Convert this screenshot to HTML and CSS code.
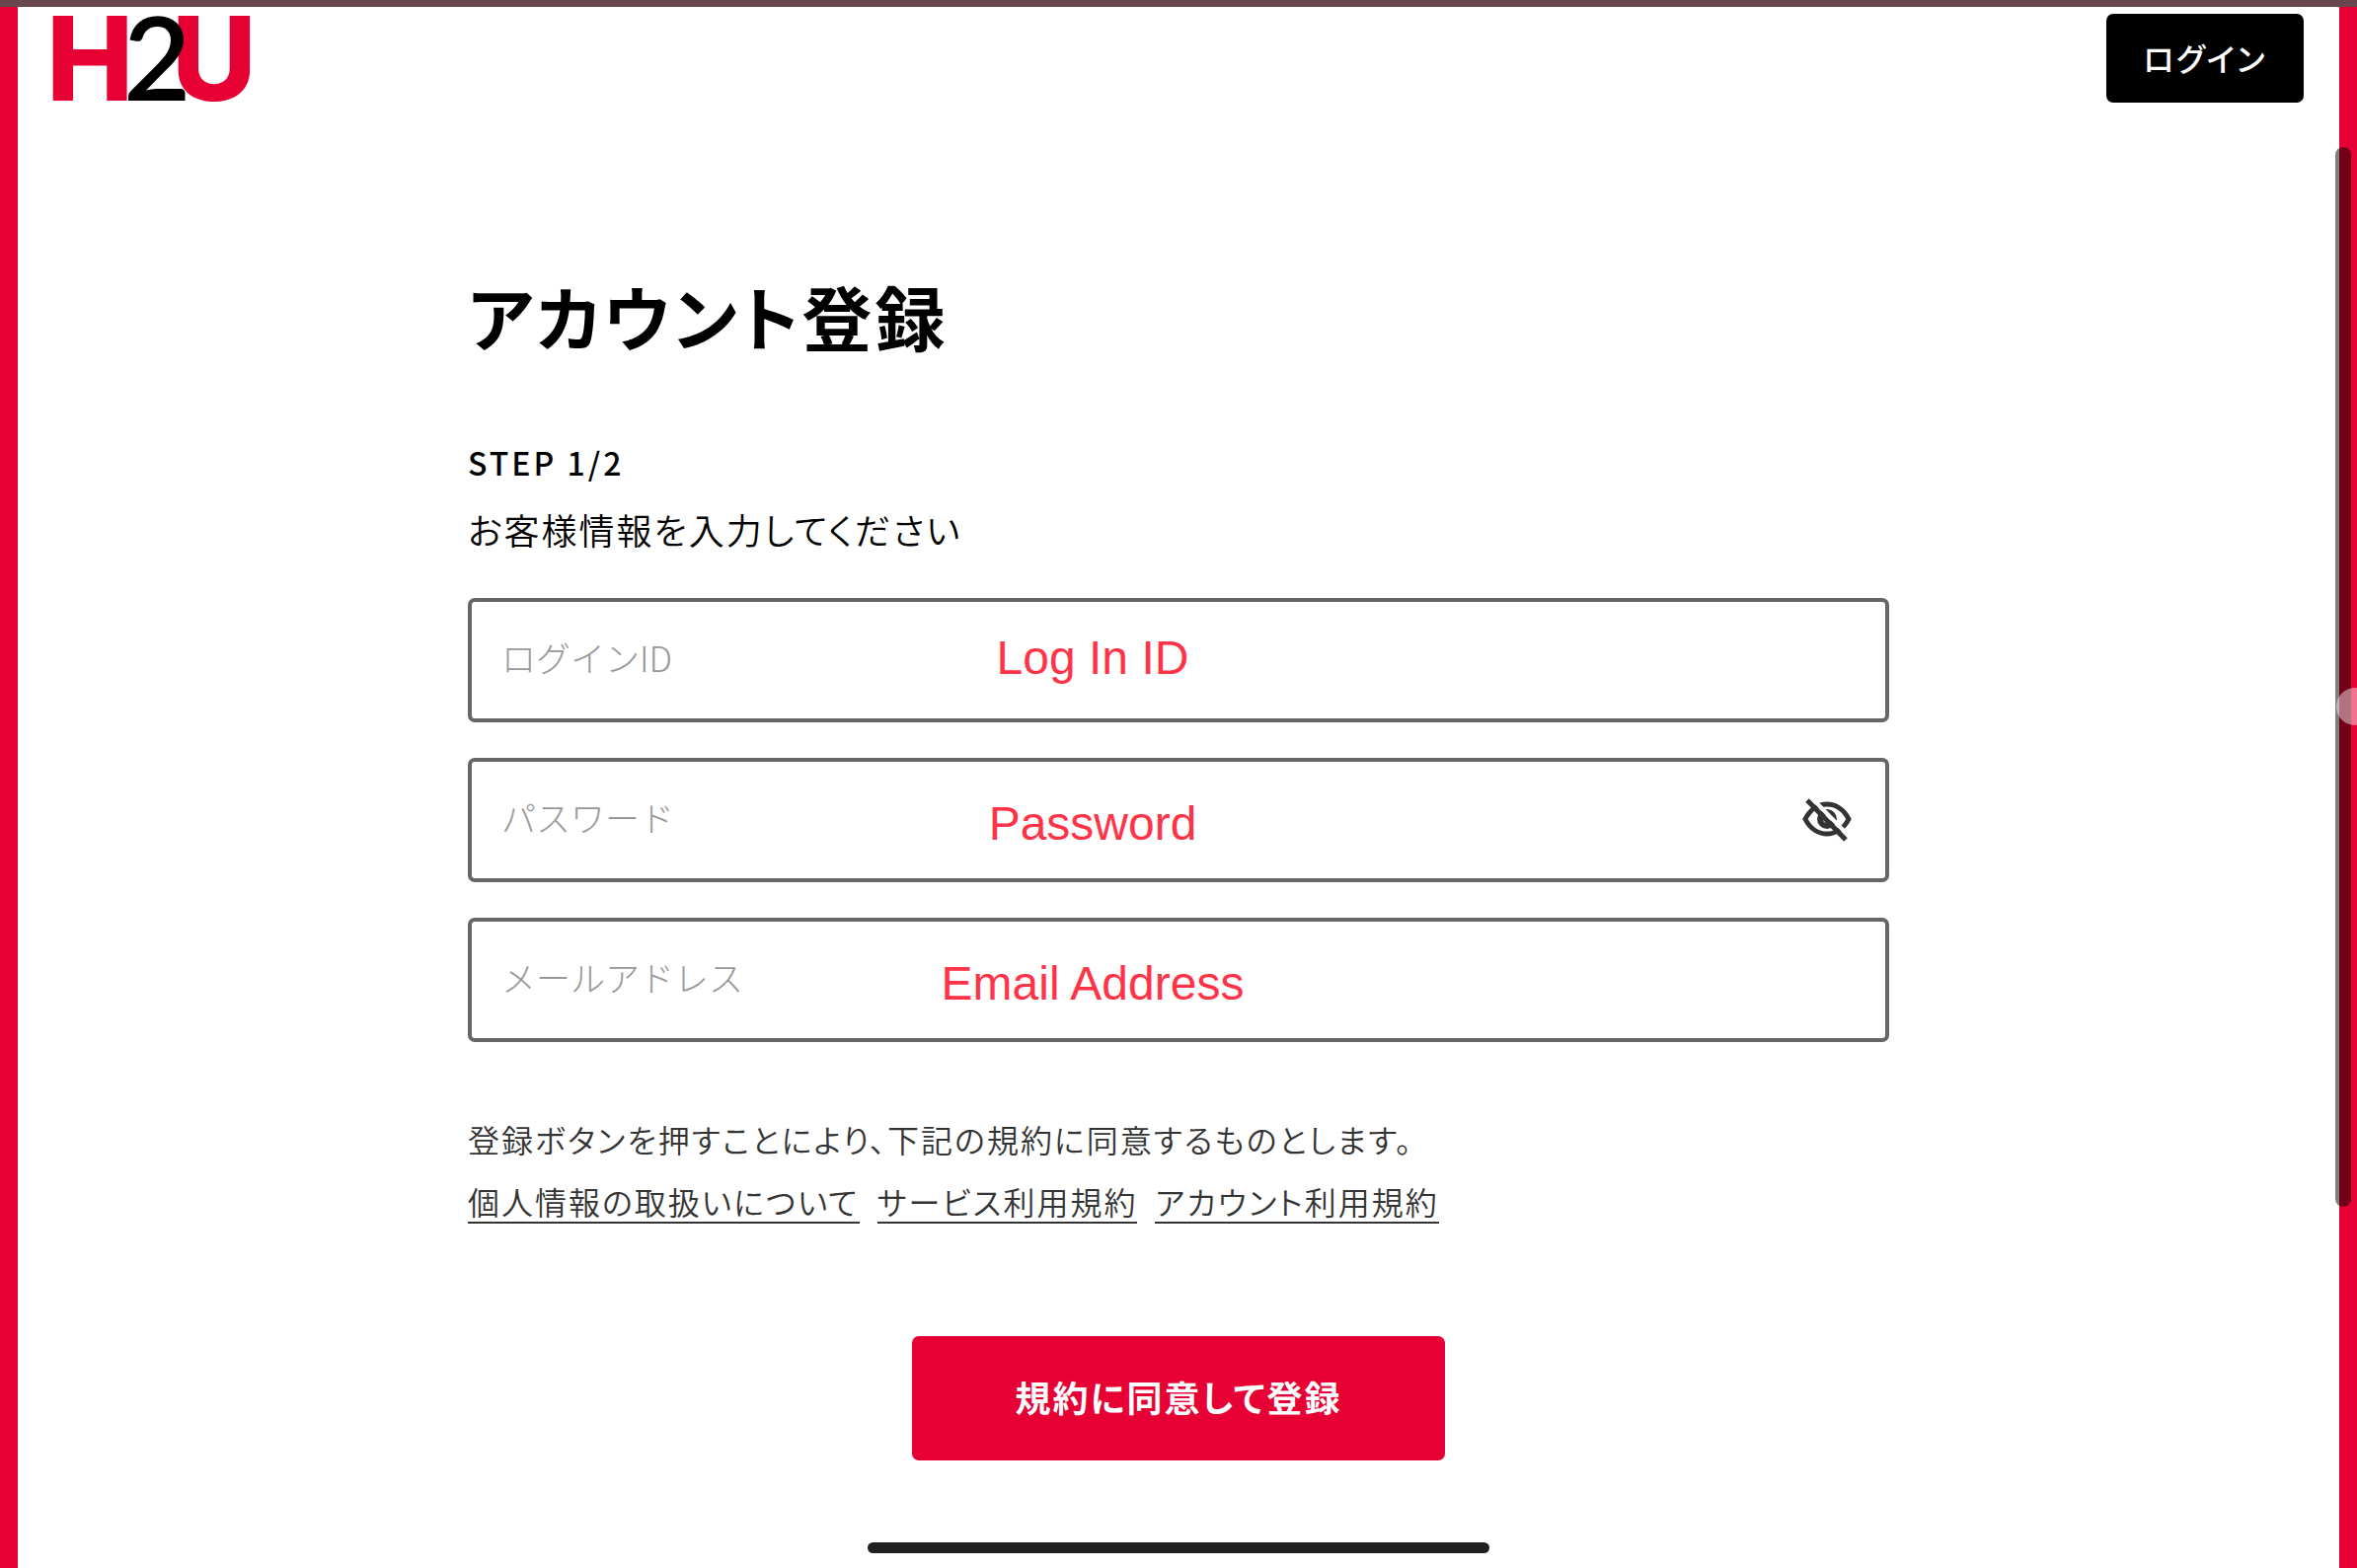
FILE: index.html
```html
<!DOCTYPE html>
<html lang="ja">
<head>
	<title>アカウント登録 | H2U</title>
	<meta charset="utf-8">
	<meta name="viewport" content="width=device-width, initial-scale=1">
	<link rel="stylesheet" href="styles.css">
</head>
<body>
	<div class="status"></div>
	<div class="page">
		<header>
			<a href="#" class="logo" aria-label="H2U">
				<svg width="240" height="160" viewBox="-20 -35 240 160">
					<text class="logo-red" x="-7" y="88">H</text>
					<text class="logo-red" x="120" y="88">U</text>
					<text class="logo-black" x="71" y="88">2</text>
				</svg>
			</a>
			<a href="#" class="login">ログイン</a>
		</header>

		<main>
			<h1>アカウント登録</h1>
			<h2>STEP 1/2</h2>
			<p class="lead">お客様情報を入力してください</p>

			<form>
				<div class="field">
					<input type="text" id="loginId" placeholder="ログインID" aria-label="ログインID">
					<label class="note" for="loginId">Log In ID</label>
				</div>
				<div class="field">
					<input type="password" id="password" placeholder="パスワード" aria-label="パスワード">
					<label class="note low" for="password">Password</label>
					<button type="button" class="eye" aria-label="パスワードを表示">
						<svg width="54" height="48" viewBox="0 0 54 48">
							<path d="M5 24C15 4 39 4 49 24C39 44 15 44 5 24Z" fill="none" stroke="#333" stroke-width="5"/>
							<circle cx="27" cy="24" r="7" fill="none" stroke="#333" stroke-width="6"/>
							<path d="M11 2L50 42" stroke="#fff" stroke-width="4"/>
							<path d="M7 5L46 45" stroke="#333" stroke-width="5"/>
						</svg>
					</button>
				</div>
				<div class="field">
					<input type="email" id="email" placeholder="メールアドレス" aria-label="メールアドレス">
					<label class="note low" for="email">Email Address</label>
				</div>

				<p class="terms">登録ボタンを押すことにより、下記の規約に同意するものとします。</p>
				<div class="links">
					<a href="#">個人情報の取扱いについて</a>
					<a href="#">サービス利用規約</a>
					<a href="#">アカウント利用規約</a>
				</div>

				<button type="submit" class="submit">規約に同意して登録</button>
			</form>
		</main>
	</div>

	<div class="scrollbar"></div>
	<div class="touch"></div>
	<div class="home-bar"></div>
</body>
</html>
```
FILE: styles.css
```css
* {
	box-sizing: border-box;
}

body {
	margin: 0;
	min-height: 100vh;
	display: flex;
	flex-direction: column;
	background: #fff;
	color: #000;
	font-family: "Noto Sans CJK JP", sans-serif;
	font-feature-settings: "palt";
	letter-spacing: 2px;
}

.status {
	height: 7px;
	background: #6a474e;
}

.page {
	flex: 1;
	border: solid #e60033;
	border-width: 0 18px;
}

header {
	display: flex;
	justify-content: space-between;
	padding: 7px 36px;
}

.logo {
	height: 90px;
}

.logo svg {
	display: block;
	margin: -35px -20px;
}

.logo-red {
	fill: #e60033;
	font: 800 118px Inter, sans-serif;
	letter-spacing: 0;
}

.logo-black {
	fill: #000;
	font: 600 118px Lato, sans-serif;
	letter-spacing: 0;
}

.login {
	width: 200px;
	height: 90px;
	border-radius: 7px;
	background: #000;
	color: #fff;
	font-size: 32px;
	font-weight: 500;
	line-height: 88px;
	text-align: center;
	text-decoration: none;
}

main {
	max-width: 1440px;
	margin: 0 auto;
	padding-top: 154px;
}

h1 {
	margin: 0;
	font-size: 71px;
	font-weight: 700;
	line-height: 108px;
	letter-spacing: 3px;
}

h2 {
	margin: 63px 0 0;
	font-size: 32px;
	font-weight: 500;
	line-height: 64px;
	letter-spacing: 3px;
}

.lead {
	margin: 4px 0 38px;
	font-size: 36px;
	font-weight: 350;
	line-height: 64px;
}

.field {
	position: relative;
	margin-bottom: 36px;
}

.field input {
	display: block;
	width: 100%;
	height: 126px;
	padding: 0 30px 8px;
	border: 4px solid #666;
	border-radius: 7px;
	background: #fff;
	outline: none;
	font: 300 35px "Noto Sans CJK JP", sans-serif;
}

.field input::placeholder {
	color: #999;
	opacity: 1;
}

/* english captions laid over the fields */
.note {
	position: absolute;
	inset: 0;
	padding-right: 174px;
	color: #ff3347;
	font: 48px/122px "Liberation Sans", sans-serif;
	letter-spacing: 0;
	text-align: center;
}

.note.low {
	line-height: 134px;
}

.eye {
	position: absolute;
	top: 38px;
	right: 36px;
	padding: 0;
	border: 0;
	background: none;
}

.eye svg {
	display: block;
}

.terms {
	margin: 66px 0 10px;
	color: #333;
	font-size: 32px;
	font-weight: 350;
	line-height: 64px;
}

.links {
	display: flex;
	gap: 18px;
}

.links a {
	border-bottom: 2px solid #333;
	color: #333;
	font-size: 32px;
	font-weight: 350;
	line-height: 42px;
	text-decoration: none;
}

.submit {
	display: block;
	width: 540px;
	height: 126px;
	margin: 114px auto 0;
	padding: 0 0 4px;
	border: 0;
	border-radius: 7px;
	background: #e60033;
	color: #fff;
	font: 700 36px "Noto Sans CJK JP", sans-serif;
	font-feature-settings: "palt";
	letter-spacing: 2px;
}

.scrollbar {
	position: fixed;
	top: 149px;
	right: 6px;
	width: 16px;
	height: 1074px;
	border-radius: 8px;
	background: rgba(0,0,0,0.5);
}

.touch {
	position: fixed;
	top: 697px;
	right: -17px;
	width: 38px;
	height: 38px;
	border-radius: 50%;
	background: rgba(255,255,255,0.45);
}

.home-bar {
	position: fixed;
	bottom: 15px;
	left: 50%;
	width: 630px;
	height: 11px;
	margin-left: -315px;
	border-radius: 6px;
	background: #202020;
}
```
